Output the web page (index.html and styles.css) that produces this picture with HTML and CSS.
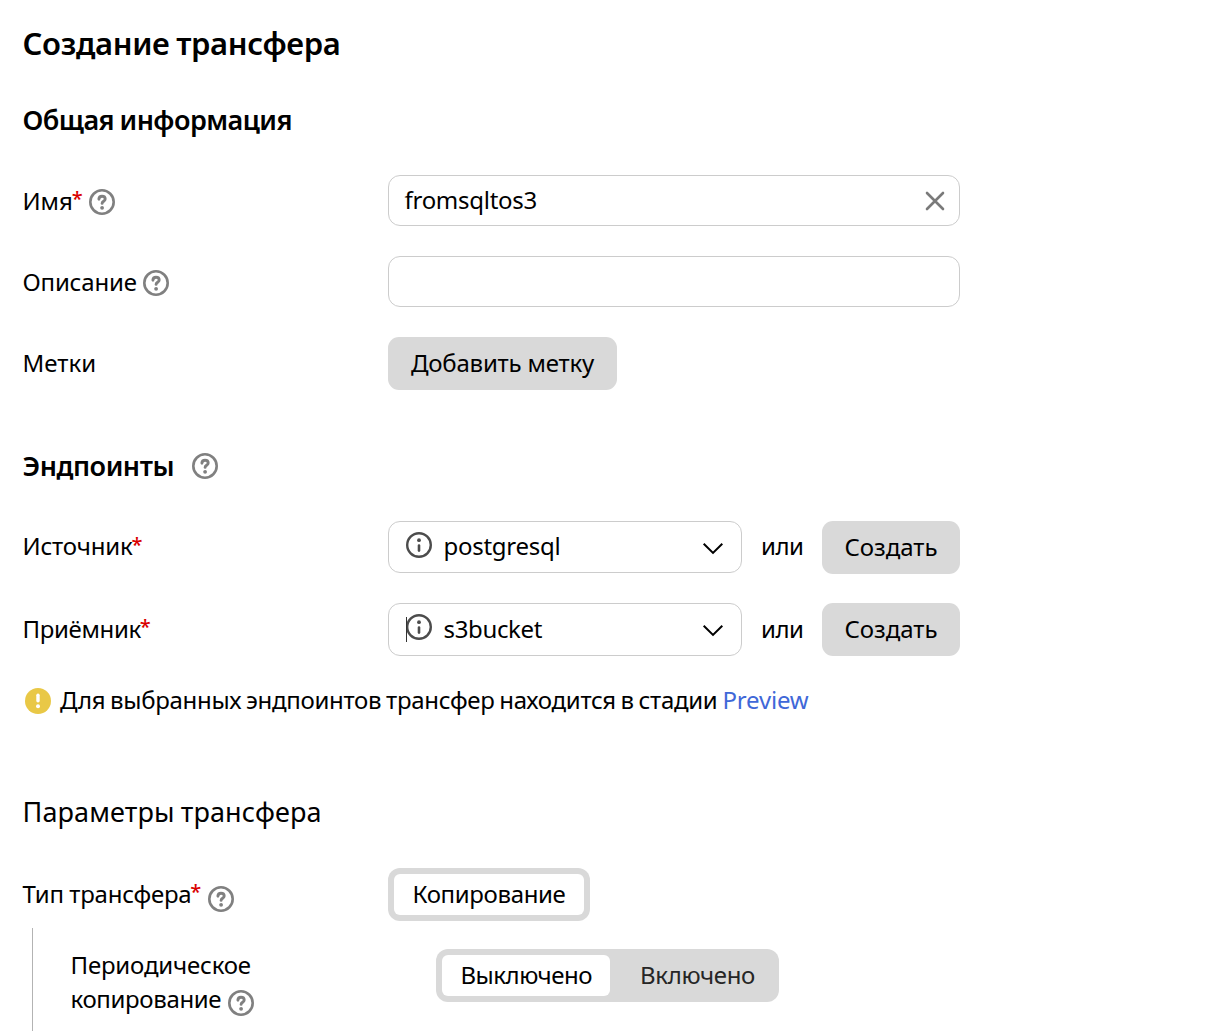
FILE: index.html
```html
<!DOCTYPE html>
<html lang="ru">
<head>
<meta charset="utf-8">
<title>Создание трансфера</title>
<link rel="stylesheet" href="styles.css">
</head>
<body>
<svg class="sprite" aria-hidden="true">
  <symbol id="help" viewBox="0 0 26 26">
    <circle cx="13" cy="13" r="11.7" fill="none" stroke="currentColor" stroke-width="2.6"/>
    <path d="M9.9 10.2C10 8.3 11.300 7.200 13 7.200C14.800 7.200 16.200 8.300 16.200 10C16.200 12.200 13.100 12.200 13.100 14.400" fill="none" stroke="currentColor" stroke-width="2.900" stroke-linecap="round"/>
    <circle cx="13.100" cy="18.800" r="1.900" fill="currentColor"/>
  </symbol>
  <symbol id="info" viewBox="0 0 26 26">
    <circle cx="13" cy="13" r="11.800" fill="none" stroke="currentColor" stroke-width="2.400"/>
    <circle cx="13" cy="8.200" r="1.900" fill="currentColor"/>
    <path d="M13 13.600V18.600" fill="none" stroke="currentColor" stroke-width="2.600" stroke-linecap="round"/>
  </symbol>
  <symbol id="chevron" viewBox="0 0 22 14">
    <path d="M1.700 1.700L11 10.900L20.300 1.700" fill="none" stroke="currentColor" stroke-width="2"/>
  </symbol>
</svg>
<main class="page">
  <h1 class="title"><span class="t-title">Создание трансфера</span></h1>

  <h2 class="section section-general"><span class="t-general">Общая информация</span></h2>
  <div class="row row-name">
    <div class="label"><span class="t-name">Имя</span><span class="req">*</span><svg class="icon help"><use href="#help"/></svg></div>
    <div class="input"><span class="t-value">fromsqltos3</span>
      <svg class="clear" viewBox="0 0 20 20"><path d="M2 2L18 18M18 2L2 18" fill="none" stroke="currentColor" stroke-width="2.600" stroke-linecap="round"/></svg>
    </div>
  </div>
  <div class="row row-description">
    <div class="label"><span class="t-desc">Описание</span><svg class="icon help"><use href="#help"/></svg></div>
    <div class="input"></div>
  </div>
  <div class="row row-labels">
    <div class="label"><span class="t-labels">Метки</span></div>
    <button class="button button-add"><span class="t-add">Добавить метку</span></button>
  </div>

  <h2 class="section section-endpoints"><span class="t-endpoints">Эндпоинты</span><svg class="icon help"><use href="#help"/></svg></h2>
  <div class="row row-source">
    <div class="label"><span class="t-source">Источник</span><span class="req">*</span></div>
    <div class="choice">
      <div class="select"><svg class="icon info"><use href="#info"/></svg><span class="t-pg">postgresql</span><svg class="chevron"><use href="#chevron"/></svg></div>
      <span class="or"><span class="t-or">или</span></span>
      <button class="button button-create"><span class="t-create">Создать</span></button>
    </div>
  </div>
  <div class="row row-target">
    <div class="label"><span class="t-target">Приёмник</span><span class="req">*</span></div>
    <div class="choice">
      <div class="select focused"><svg class="icon info"><use href="#info"/></svg><span class="t-s3">s3bucket</span><svg class="chevron"><use href="#chevron"/></svg></div>
      <span class="or"><span class="t-or">или</span></span>
      <button class="button button-create"><span class="t-create">Создать</span></button>
    </div>
  </div>
  <p class="note">
    <svg class="warning" viewBox="0 0 26 26"><circle cx="13" cy="13" r="13" fill="#e9c846"/><path d="M13 7.300V12.800" stroke="#fff" stroke-width="3.400" stroke-linecap="round"/><circle cx="13" cy="18.300" r="2" fill="#fff"/></svg>
    <span class="t-note">Для выбранных эндпоинтов трансфер находится в стадии</span>
    <a class="link" href="#"><span class="t-preview">Preview</span></a>
  </p>

  <h2 class="section section-params"><span class="t-params">Параметры трансфера</span></h2>
  <div class="row row-type">
    <div class="label"><span class="t-type">Тип трансфера</span><span class="req">*</span><svg class="icon help lowered"><use href="#help"/></svg></div>
    <div class="segmented segmented-type"><span class="segment active"><span class="t-copy">Копирование</span></span></div>
  </div>
  <div class="nested">
    <div class="label nested-label">
      <span class="t-periodic">Периодическое</span>
      <span class="nested-line"><span class="t-copying">копирование</span><svg class="icon help lowered"><use href="#help"/></svg></span>
    </div>
    <div class="segmented segmented-period">
      <span class="segment active"><span class="t-off">Выключено</span></span>
      <span class="segment inactive"><span class="t-on">Включено</span></span>
    </div>
  </div>
</main>
</body>
</html>
```
FILE: styles.css
```css
* { box-sizing: border-box; }
html, body { margin: 0; background: #fff; }
body {
  height: 1031px;
  overflow: hidden;
  color: #000;
  font: 24px/34px "Noto Sans", "Open Sans", sans-serif;
  white-space: nowrap;
}
svg { display: block; flex: none; }
.sprite { position: absolute; width: 0; height: 0; }
h1, h2, p { margin: 0; }
.page { display: flex; flex-direction: column; height: 1031px; padding: 22px 0 0 23px; }
.title { height: 42px; font-size: 31px; font-weight: 600; line-height: 42px; margin-left: -0.5px; }
.section { display: flex; align-items: center; height: 38px; font-size: 27px; font-weight: 600; line-height: 38px; margin-left: -0.5px; }
.section-general { margin-top: 37px; }
.section-endpoints { margin-top: 57px; gap: 17.5px; }
.section-params { margin-top: 75px; font-weight: 400; }

.row { display: grid; grid-template-columns: 365px 572px; align-items: center; flex: none; }
.row-name { height: 51px; margin-top: 36px; }
.row-description { height: 51px; margin-top: 30px; }
.row-labels { height: 53px; margin-top: 30px; }
.row-source { height: 53px; margin-top: 36px; }
.row-target { height: 53px; margin-top: 29px; }
.row-type { height: 53px; margin-top: 37px; }

.label { display: flex; align-items: center; margin-left: -0.5px; }
.row-labels .label, .row-target .label, .row-type .label { margin-top: -2px; }
.row-source .label { margin-top: -3px; }
.req { width: 10px; margin: -3px 0 0 -1px; color: #d90000; font-size: 20px; font-weight: 500; }
.icon { width: 26px; height: 26px; }
.help { color: #808080; margin: 2px 0 0 6.5px; }
.req + .help { margin-left: 7.5px; }
.row-type .req + .help { margin-left: 8px; }
.section .help { margin: 0; }
.help.lowered { transform: translateY(4px); }
.info { color: #4c4c4c; margin-top: -4px; }
.focused .info { margin-top: -5px; }

.input, .select { display: flex; align-items: center; border: 1px solid #ccc; border-radius: 12px; background: #fff; }
.input { height: 51px; padding: 0 14px 0 15.5px; }
.t-value { margin-top: -2px; }
.clear { width: 20px; height: 20px; margin-left: auto; color: #7a7a7a; }
.choice { display: grid; grid-template-columns: 354px 80px 138px; align-items: start; }
.select { position: relative; height: 53px; padding: 0 17px; gap: 11.5px; }
.row-source .select { height: 52px; }
.t-pg, .t-s3 { margin-top: -2px; }
.chevron { width: 22px; height: 14px; margin: 3px 0 0 auto; }
.focused::before { content: ""; position: absolute; left: 17px; top: 13px; width: 1px; height: 25px; background: #333; }
.or { padding-left: 19px; line-height: 50px; }
.row-target .or { line-height: 51px; }
.button { height: 53px; padding: 0; border: 0; border-radius: 11px; background: #d9d9d9; color: #000; font: inherit; }
.t-create, .t-add { position: relative; top: -1px; }
.button-add { width: 229px; }

.note { display: flex; align-items: center; height: 34px; margin: 28px 0 0 2px; }
.warning { width: 26px; height: 26px; margin-right: 9px; }
.t-note, .link { margin-top: -2px; }
.link { margin-left: 5px; color: #3f68d8; text-decoration: none; }

.segmented { display: flex; height: 53px; padding: 6px; border-radius: 12px; background: #d9d9d9; }
.segmented-type { width: 202px; }
.segmented-period { width: 343px; }
.segment { display: flex; flex: none; align-items: center; padding: 0 0 2px 18.5px; border-radius: 6px; }
.segmented-type .segment { width: 190px; }
.segmented-period .active { width: 168px; }
.active { background: #fff; }
.segmented .inactive { padding-left: 30px; color: #262626; }

.nested { display: grid; grid-template-columns: 365px 343px; flex: none; align-items: start; height: 103px; margin: 7px 0 0 9px; padding: 21px 0 0 38px; border-left: 1px solid #b3b3b3; }
.nested-label { display: block; margin-top: -1px; }
.nested-label .help { margin-top: 0; }
.t-periodic { display: inline-block; }
.nested-line { display: flex; align-items: center; }

/* Tracking per label */
.t-title { letter-spacing: -0.35px; word-spacing: -1px; }
.t-general { letter-spacing: -0.55px; word-spacing: -1px; }
.t-endpoints { letter-spacing: -0.45px; }
.t-params { letter-spacing: 0.12px; word-spacing: -1px; }
.t-name { letter-spacing: -0.1px; }
.t-desc, .t-add, .t-preview { letter-spacing: -0.2px; }
.t-source, .t-periodic { letter-spacing: -0.18px; }
.t-type { letter-spacing: -0.25px; word-spacing: -0.5px; }
.t-value, .t-pg { letter-spacing: -0.28px; }
.t-target, .t-copying, .t-copy, .t-s3, .t-on { letter-spacing: -0.35px; }
.t-note { letter-spacing: -0.3px; word-spacing: -1.2px; }
.t-or, .t-off { letter-spacing: -0.5px; }
```
